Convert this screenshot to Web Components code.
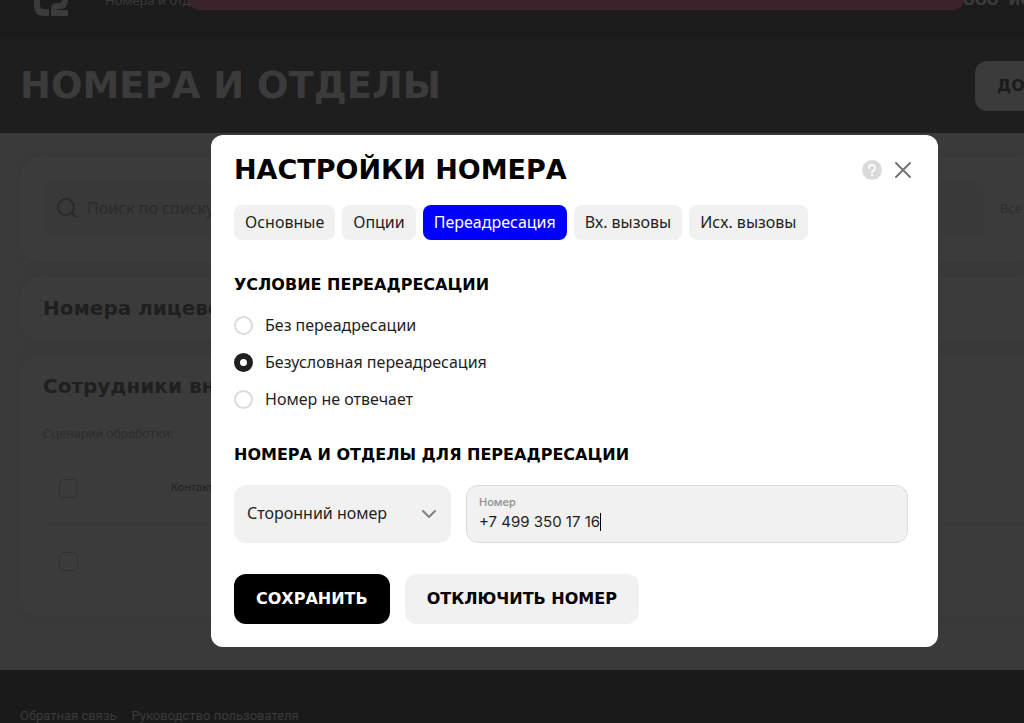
<!DOCTYPE html>
<html lang="ru">
<head>
<meta charset="utf-8">
<meta name="viewport" content="width=device-width, initial-scale=1">
<title>Номера и отделы</title>
<style>
  html, body { margin: 0; min-height: 100%; }
  body {
    --display: "DejaVu Sans", sans-serif;
    --text: "Noto Sans", sans-serif;
    position: relative;
    overflow: hidden;
    height: 100vh;
    background: #1a1a1a;
    font: 16px/20px var(--text);
    color: #1f1f1f;
  }
</style>
</head>
<body>
<app-page></app-page>
<modal-layer>
  <number-dialog></number-dialog>
</modal-layer>

<script>
const define = (name, html, setup) => {
  const template = document.createElement('template');
  template.innerHTML = html;
  customElements.define(name, class extends HTMLElement {
    constructor() {
      super();
      this.attachShadow({ mode: 'open' }).append(template.content.cloneNode(true));
    }
    connectedCallback() { if (setup) setup(this, this.shadowRoot); }
  });
};

/* ---------- page behind the dialog ---------- */

define('site-header', `
<style>
  :host { display: flex; align-items: flex-start; height: 39px; overflow: hidden; background: #1b1b1b; color: #3b3b3b; font-size: 13px; padding-left: 34px; position: relative; }
  svg { display: block; flex: none; width: 34px; height: 16px; }
  nav { margin: -10px 0 0 37px; white-space: nowrap; }
  a { color: inherit; text-decoration: none; }
  .company { margin: -10px 0 0 auto; width: 61px; white-space: pre; font: bold 14px/20px var(--display); }
  .toast { position: absolute; top: -30px; left: 189px; right: 60px; height: 40px; border-radius: 10px; background: #3b2327; }
</style>
<svg viewBox="0 0 34 16" role="img" aria-label="t2">
  <path d="M0 0H6V5Q6 9 10 9H15V16H10Q0 16 0 6Z" fill="#3b3b3b"/>
  <path d="M17 16V8Q17 3 23 3H25Q28 3 28 0H34Q34 9 26 9H23V10H34V16Z" fill="#3b3b3b"/>
</svg>
<nav><a href="#">Номера и отд</a></nav>
<div class="toast"></div>
<div class="company">ООО  ИС</div>`);

define('page-hero', `
<style>
  :host { display: flex; align-items: center; justify-content: space-between; height: 94px; background: #1e1e1e; padding-left: 20px; }
  h1 { margin: 0; font: bold 37px/44px var(--display); color: #3b3b3b; white-space: nowrap; }
  button { flex: none; width: 49px; height: 50px; border: 0; border-radius: 12px 0 0 12px; background: #3b3b3b; color: #1b1b1b; padding: 0 0 0 22px; font: bold 16px/20px var(--display); text-align: left; white-space: nowrap; overflow: hidden; }
</style>
<h1>НОМЕРА И ОТДЕЛЫ</h1>
<button type="button">ДО</button>`);

define('page-card', `
<style>
  :host { display: block; border-radius: 20px 0 0 20px; background: #3b3b3b; box-shadow: 0 0 8px #383838; }
  h2 { margin: 0; padding: 0 23px; font: bold 20px/63px var(--display); color: #1f1f1f; }
  h2:empty { display: none; }
</style>
<h2></h2><slot></slot>`, (el, root) => {
  root.querySelector('h2').textContent = el.getAttribute('heading') || '';
});

define('list-search', `
<style>
  :host { display: flex; align-items: center; gap: 16px; padding: 24px 0 24px 24px; color: #2b2b2b; }
  label { flex: 1; display: flex; align-items: center; gap: 9px; box-sizing: border-box; height: 57px; padding: 0 0 4px 12px; border-radius: 12px; background: #393939; }
  svg { flex: none; width: 22px; height: 22px; }
  input { flex: 1; min-width: 0; border: 0; padding: 0; background: none; font: 16px/20px var(--text); color: #2b2b2b; }
  input::placeholder { color: #2b2b2b; opacity: 1; }
  a { width: 24px; overflow: hidden; padding-bottom: 4px; color: #2e2e2e; text-decoration: none; font-size: 13px; }
</style>
<label aria-label="Поиск по списку">
  <svg viewBox="0 0 22 22" fill="none" stroke="#292929" stroke-width="2" stroke-linecap="round"><circle cx="10" cy="10" r="8"/><path d="M16 16l4 4"/></svg>
  <input type="search" placeholder="Поиск по списку">
</label>
<a href="#">Все</a>`);

define('staff-list', `
<style>
  :host { display: block; padding: 6px 0 19px; }
  p { margin: 0 0 8px 23px; font: 13px/20px Roboto, sans-serif; color: #2d2d2d; }
  ul { list-style: none; margin: 0 0 0 27px; padding: 0; }
  li { display: flex; align-items: center; gap: 93px; height: 72px; padding-left: 12px; color: #1f1f1f; font-size: 11px; }
  li + li { border-top: 1px solid #363636; }
  input { appearance: none; box-sizing: border-box; flex: none; margin: 0; width: 19px; height: 19px; border: 1px solid #303030; border-radius: 5px; }
  label { padding-bottom: 2px; }
</style>
<p>Сценарий обработки:</p>
<ul>
  <li><input type="checkbox" id="a"><label for="a">Контакт</label></li>
  <li><input type="checkbox" aria-label="Выбрать сотрудника"></li>
</ul>`);

define('site-footer', `
<style>
  :host { display: flex; gap: 15px; height: 53px; overflow: hidden; box-sizing: border-box; padding: 36px 20px 0; background: #1a1a1a; font: 13px/20px Roboto, sans-serif; }
  a { color: #3b3b3b; text-decoration: none; white-space: nowrap; }
</style>
<a href="#">Обратная связь</a><a href="#">Руководство пользователя</a>`);

define('app-page', `
<style>
  :host { display: block; }
  main { display: flex; flex-direction: column; gap: 15px; padding: 24px 0 54px 20px; background: #3a3a3a; overflow: hidden; }
</style>
<site-header></site-header>
<page-hero></page-hero>
<main>
  <page-card><list-search></list-search></page-card>
  <page-card heading="Номера лицево"></page-card>
  <page-card heading="Сотрудники вн"><staff-list></staff-list></page-card>
</main>
<site-footer></site-footer>`);

/* ---------- dialog ---------- */

define('modal-layer', `
<style>
  :host { position: absolute; inset: 0; display: block; padding: 135px 86px 0 211px; }
</style>
<slot></slot>`);

define('tab-bar', `
<style>
  :host { display: flex; flex-wrap: wrap; gap: 7px; }
  button { height: 35px; border: 0; border-radius: 8px; padding: 0 11px 2px; background: #f1f1f1; color: #1f1f1f; font: 16px/20px var(--text); white-space: nowrap; }
  button[aria-selected="true"] { background: #00f; color: #fff; }
</style>
<button role="tab" aria-selected="false">Основные</button>
<button role="tab" aria-selected="false">Опции</button>
<button role="tab" aria-selected="true">Переадресация</button>
<button role="tab" aria-selected="false">Вх. вызовы</button>
<button role="tab" aria-selected="false">Исх. вызовы</button>`);

define('forward-rules', `
<style>
  :host { display: block; }
  fieldset { border: 0; margin: 0; padding: 0; display: grid; gap: 17px; }
  legend { padding: 0; margin-bottom: 20px; font: bold 16px/20px var(--display); color: #000; }
  label { display: flex; align-items: center; gap: 12px; }
  input { appearance: none; box-sizing: border-box; flex: none; margin: 0; width: 19px; height: 19px; border: 2px solid #dcdcdc; border-radius: 50%; background: #fff; }
  input:checked { border: 6px solid #1f1f1f; }
</style>
<fieldset>
  <legend>УСЛОВИЕ ПЕРЕАДРЕСАЦИИ</legend>
  <label><input type="radio" name="rule">Без переадресации</label>
  <label><input type="radio" name="rule" checked>Безусловная переадресация</label>
  <label><input type="radio" name="rule">Номер не отвечает</label>
</fieldset>`);

define('select-field', `
<style>
  :host { display: grid; align-items: center; height: 58px; border-radius: 12px; background: #f1f1f1; }
  select, svg { grid-area: 1 / 1; }
  select { appearance: none; width: 100%; height: 100%; border: 0; border-radius: 12px; background: none; padding: 0 44px 2px 13px; font: 16px/20px var(--text); color: #1f1f1f; }
  svg { justify-self: end; margin-right: 14px; width: 16px; height: 10px; pointer-events: none; }
</style>
<select aria-label="Тип номера"><option>Сторонний номер</option></select>
<svg viewBox="0 0 16 10" fill="none" stroke="#808080" stroke-width="2" stroke-linecap="round" stroke-linejoin="round"><path d="M2 2l6 6 6-6"/></svg>`);

define('phone-field', `
<style>
  :host { display: flex; flex-direction: column; justify-content: center; box-sizing: border-box; height: 58px; padding: 0 12px; border: 1px solid #dcdcdc; border-radius: 12px; background: #f1f1f1; }
  label { font: 500 11px/16px Inter, sans-serif; color: #8f8f8f; }
  .value { display: flex; align-items: center; height: 24px; }
  input { field-sizing: content; border: 0; padding: 0; background: none; outline: 0; font: 15px/20px Inter, sans-serif; color: #1f1f1f; caret-color: transparent; }
  .caret { width: 1px; height: 18px; background: #000; }
</style>
<label for="phone">Номер</label>
<div class="value"><input id="phone" type="tel" value="+7 499 350 17 16"><span class="caret"></span></div>`);

define('action-button', `
<style>
  :host { display: block; }
  button { height: 50px; border: 0; border-radius: 12px; padding: 0 22px; background: #f1f1f1; color: #000; font: bold 16px/20px var(--display); white-space: nowrap; }
  :host([primary]) button { background: #000; color: #fff; }
</style>
<button type="button"><slot></slot></button>`);

define('number-dialog', `
<style>
  :host { display: block; border-radius: 12px; background: #fff; padding: 19px 30px 23px 23px; }
  header { display: flex; align-items: center; gap: 8px; margin-bottom: 19px; }
  h2 { flex: 1; margin: 0; font: bold 27px/32px var(--display); color: #000; white-space: nowrap; }
  header button { display: grid; place-items: center; width: 23px; height: 24px; border: 0; padding: 0; background: none; }
  header button:last-child { margin-right: -6px; }
  forward-rules { margin: 35px 0 36px; }
  h3 { margin: 0 0 20px; font: bold 16px/20px var(--display); color: #000; }
  .fields { display: grid; grid-template-columns: 217px 1fr; gap: 15px; margin-bottom: 31px; }
  .actions { display: flex; gap: 15px; }
</style>
<header>
  <h2>НАСТРОЙКИ НОМЕРА</h2>
  <button type="button" aria-label="Справка"><svg width="20" height="20" viewBox="0 0 20 20"><circle cx="10" cy="10" r="10" fill="#dadada"/><path d="M7 8a3 3 0 1 1 4.6 2.5Q10 11.400 10 12.600" fill="none" stroke="#fff" stroke-width="1.800" stroke-linecap="round"/><circle cx="10" cy="15.200" r="1.100" fill="#fff"/></svg></button>
  <button type="button" aria-label="Закрыть"><svg width="18" height="18" viewBox="0 0 18 18" fill="none" stroke="#757575" stroke-width="2" stroke-linecap="round"><path d="M2 2l14 14M16 2L2 16"/></svg></button>
</header>
<tab-bar role="tablist"></tab-bar>
<forward-rules></forward-rules>
<h3>НОМЕРА И ОТДЕЛЫ ДЛЯ ПЕРЕАДРЕСАЦИИ</h3>
<div class="fields"><select-field></select-field><phone-field></phone-field></div>
<div class="actions"><action-button primary>СОХРАНИТЬ</action-button><action-button>ОТКЛЮЧИТЬ НОМЕР</action-button></div>`);
</script>
</body>
</html>
